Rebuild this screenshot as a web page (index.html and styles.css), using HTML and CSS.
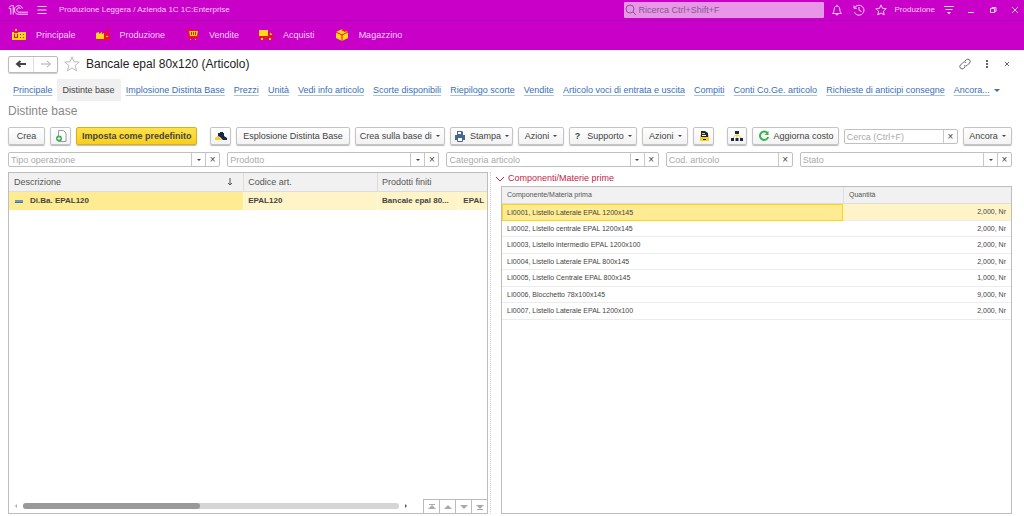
FILE: index.html
```html
<!DOCTYPE html>
<html lang="it">
<head>
<meta charset="utf-8">
<title>Produzione Leggera / Azienda 1C 1C:Enterprise</title>
<link rel="stylesheet" href="styles.css">
</head>
<body>
<header class="titlebar">
  <svg class="logo" viewBox="0 0 20 12" role="img" aria-label="1C"><path d="M.8 4.500H2.800V10.500M.8 3.500L3.500 1.500H5.200V10.500"/><path d="M14.600 4.500A4.200 4.200 0 1 0 11 10.200H20M12.800 4.800A2.200 2.200 0 1 0 11 8.200H20"/></svg>
  <button class="icon-btn" aria-label="Menu"><svg class="i12" viewBox="0 0 12 12"><path d="M1.500 2.500h9M1.500 6h9M1.500 9.500h9"/></svg></button>
  <span class="app-name">Produzione Leggera / Azienda 1C 1C:Enterprise</span>
  <label class="global-search">
    <svg class="i12" viewBox="0 0 12 12"><circle cx="5" cy="5" r="4"/><path d="M8 8l3 3"/></svg>
    <input type="text" aria-label="Ricerca" placeholder="Ricerca Ctrl+Shift+F">
  </label>
  <div class="title-tools">
    <button class="icon-btn" aria-label="Notifiche"><svg class="i12" viewBox="0 0 12 12"><path d="M1.500 9.500h9C9 8 9 7 8.800 5 8.600 3 7.500 2 6 2S3.400 3 3.200 5C3 7 3 8 1.500 9.500zM6 .8V2M4.800 9.700a1.200 1.300 0 0 0 2.400 0"/></svg></button>
    <button class="icon-btn" aria-label="Cronologia"><svg class="i12" viewBox="0 0 12 12"><path d="M1.500 4A5 5 0 1 1 1.300 8M1 1.500V4.300H3.800M6 3v3.300l2.500 1.200"/></svg></button>
    <button class="icon-btn" aria-label="Preferiti"><svg class="i12" viewBox="0 0 12 12"><path d="M6 .9l1.500 3.400 3.700.4-2.800 2.500.8 3.700L6 9l-3.200 1.900.8-3.700L.8 4.700l3.700-.4z"/></svg></button>
    <span class="user">Produzione</span>
    <button class="icon-btn" aria-label="Opzioni"><svg class="i12" viewBox="0 0 12 12"><path d="M1 2.500h10M2.500 5.500h7"/><path class="solid" d="M4 8h4L6 10.500z"/></svg></button>
  </div>
  <div class="window-tools">
    <button class="icon-btn" aria-label="Riduci"><svg class="i8" viewBox="0 0 8 8"><path d="M1 6.500h6"/></svg></button>
    <button class="icon-btn" aria-label="Ripristina"><svg class="i8" viewBox="0 0 8 8"><path d="M1.500 2.500h4v4h-4zM3 2.500v-1h4v4H5.500"/></svg></button>
    <button class="icon-btn" aria-label="Chiudi"><svg class="i8" viewBox="0 0 8 8"><path d="M1 1l6 6M7 1L1 7"/></svg></button>
  </div>
</header>

<nav class="sections" aria-label="Sezioni">
  <a href="#"><svg viewBox="0 0 16 14"><path class="y" d="M1 4h14v8H1z"/><path class="r" d="M3 3h4v2H3zM3 6h1v4H3zM6 6h1v4H6zM4 9h2v1H4zM9 6h1v1H9zM12 6h1v1h-1zM9 9h1v1H9zM12 9h1v1h-1z"/><path class="y" d="M4 1h2v2H4z"/></svg>Principale</a>
  <a href="#"><svg viewBox="0 0 16 14"><path class="y" d="M1 5l3-1v2l3-2v2l2-1v6H1z"/><path class="r" d="M9 8h6v4H9zM10 4h3l1 4H9zM11 2l4-2v2l-2 1h-2zM1 11h14v1H1z"/><path class="y" d="M11 8h2v1h-2z"/></svg>Produzione</a>
  <a href="#"><svg viewBox="0 0 16 14"><path class="r" d="M2 1h3v9H4L3 2H2zM5 7h9v3H5z"/><path class="y" d="M5 2h9l-1 6H6zM6 11h1v1H6zM11 11h1v1h-1z"/><path class="r" d="M7 4h1v3H7zM9 4h1v3H9zM11 4h1v3h-1zM5 2h9v1H5zM5 12h2v1H5zM10 12h2v1h-2z"/></svg>Vendite</a>
  <a href="#"><svg viewBox="0 0 16 14"><path class="y" d="M1 2h9v6H1z"/><path class="r" d="M1 8h14v3H1zM11 4h2l2 3v3h-4z"/><path class="y" d="M12 5h1l1 2h-2zM3 10h2v2H3zM11 10h2v2h-2z"/></svg>Acquisti</a>
  <a href="#"><svg viewBox="0 0 16 14"><path class="y" d="M2 4l6-3 6 3v6l-6 3-6-3z"/><path class="line-r" d="M2 4l6 3 6-3M8 7v6"/><path class="r" d="M8 1l5 2-2 1-4-2z"/></svg>Magazzino</a>
</nav>

<main class="page">
  <div class="heading-row">
    <div class="history">
      <button aria-label="Indietro"><svg class="i12" viewBox="0 0 12 12"><path class="back" d="M11 6H3M5.500 3L2 6l3.500 3"/></svg></button>
      <button aria-label="Avanti"><svg class="i12" viewBox="0 0 12 12"><path class="forward" d="M1 6h9M7 3l3.500 3L7 9"/></svg></button>
    </div>
    <button class="star" aria-label="Aggiungi ai preferiti"><svg viewBox="0 0 16 16"><path d="M8 .8l2 5 5.300.3-4.100 3.400 1.400 5.300L8 11.900l-4.600 2.900 1.400-5.300L.7 6.100 6 5.800z"/></svg></button>
    <h1>Bancale epal 80x120 (Articolo)</h1>
    <div class="page-tools">
      <button class="icon-btn" aria-label="Collegamento"><svg class="i12" viewBox="0 0 12 12"><path d="M5 7.500a2.300 2.300 0 0 0 3 0l2.500-2.500a2.200 2.200 0 0 0-3.200-3.200L6 3M7 4.500a2.300 2.300 0 0 0-3 0L1.500 7a2.200 2.200 0 0 0 3.200 3.200L6 9"/></svg></button>
      <button class="icon-btn" aria-label="Altro"><svg class="i8" viewBox="0 0 8 8"><path class="solid" d="M3 0h2v2H3zM3 3h2v2H3zM3 6h2v2H3z"/></svg></button>
      <button class="icon-btn" aria-label="Chiudi scheda"><svg class="i8" viewBox="0 0 8 8"><path d="M2 2l4 4M6 2L2 6"/></svg></button>
    </div>
  </div>

  <nav class="tabs" aria-label="Schede">
    <a href="#">Principale</a>
    <a href="#" class="active" aria-current="page">Distinte base</a>
    <a href="#">Implosione Distinta Base</a>
    <a href="#">Prezzi</a>
    <a href="#">Unità</a>
    <a href="#">Vedi info articolo</a>
    <a href="#">Scorte disponibili</a>
    <a href="#">Riepilogo scorte</a>
    <a href="#">Vendite</a>
    <a href="#">Articolo voci di entrata e uscita</a>
    <a href="#">Compiti</a>
    <a href="#">Conti Co.Ge. articolo</a>
    <a href="#">Richieste di anticipi consegne</a>
    <a href="#">Ancora... <i class="caret"></i></a>
  </nav>

  <h2>Distinte base</h2>

  <div class="toolbar">
    <button class="btn">Crea</button>
    <button class="btn" aria-label="Copia"><svg class="i12" viewBox="0 0 12 12"><path class="sheet" d="M3.500 .5h5L11 3v8.500H3.500z"/><circle class="green" cx="4" cy="8.500" r="3"/><path class="plus" d="M4 7v3M2.500 8.500h3"/></svg></button>
    <button class="btn primary">Imposta come predefinito</button>
    <button class="btn group-start" aria-label="Distinta"><svg class="i12" viewBox="0 0 12 12"><path class="gold" d="M0 10V8l3-2 4 4z"/><path class="navy" d="M3 3h2V2h3v1h1v3l3 2v2H8L5 7 3 6z"/></svg></button>
    <button class="btn">Esplosione Distinta Base</button>
    <button class="btn">Crea sulla base di <i class="caret"></i></button>
    <button class="btn"><svg class="i12" viewBox="0 0 12 12"><path class="printer" d="M3 1h5l1 1v3H3zM1 5h10v5H9V8H3v2H1z"/><path class="paper" d="M4 2h3v2H4zM4 9h4v2H4z"/><path class="line-printer" d="M3.500 8v3.500h5V8"/></svg>Stampa <i class="caret"></i></button>
    <button class="btn">Azioni <i class="caret"></i></button>
    <button class="btn"><b class="help">?</b>Supporto <i class="caret"></i></button>
    <button class="btn">Azioni <i class="caret"></i></button>
    <button class="btn" aria-label="Rapporto"><svg class="i12" viewBox="0 0 12 12"><path class="gold" d="M2 5h9v6H2z"/><path class="navy" d="M3 1h4l3 2v4H3z"/><path class="gold" d="M4 3h3v1H4z"/><path class="paper" d="M4 5h4v1H4z"/><path class="navy" d="M5 9h3v1H5z"/></svg></button>
    <button class="btn group-start" aria-label="Struttura"><svg class="i12" viewBox="0 0 12 12"><path class="line-gold" d="M6 4v4M2 8L4 5.500h4L10 8"/><path class="navy" d="M4 1h4v3H4zM0 8h3v3H0zM4.500 8h3v3h-3zM9 8h3v3H9z"/></svg></button>
    <button class="btn"><svg class="i12" viewBox="0 0 12 12"><path class="line-green" d="M9.500 3.200A4.200 4.200 0 1 0 10.200 7"/><path class="green" d="M10.500 1v4h-4z"/></svg>Aggiorna costo</button>
    <div class="field"><input type="text" aria-label="Cerca" placeholder="Cerca (Ctrl+F)"><button class="clear" aria-label="Cancella"></button></div>
    <button class="btn">Ancora <i class="caret"></i></button>
  </div>

  <div class="filters">
    <div class="field"><input type="text" aria-label="Tipo operazione" placeholder="Tipo operazione"><button aria-label="Apri elenco"><i class="caret"></i></button><button class="clear" aria-label="Cancella"></button></div>
    <div class="field"><input type="text" aria-label="Prodotto" placeholder="Prodotto"><button aria-label="Apri elenco"><i class="caret"></i></button><button class="clear" aria-label="Cancella"></button></div>
    <div class="field"><input type="text" aria-label="Categoria articolo" placeholder="Categoria articolo"><button aria-label="Apri elenco"><i class="caret"></i></button><button class="clear" aria-label="Cancella"></button></div>
    <div class="field"><input type="text" aria-label="Cod. articolo" placeholder="Cod. articolo"><button class="clear" aria-label="Cancella"></button></div>
    <div class="field"><input type="text" aria-label="Stato" placeholder="Stato"><button aria-label="Apri elenco"><i class="caret"></i></button><button class="clear" aria-label="Cancella"></button></div>
  </div>

  <div class="panes">
    <section class="list-pane">
      <table class="boms">
        <colgroup><col class="c-desc"><col class="c-code"><col class="c-prod"><col class="c-more"></colgroup>
        <thead><tr><th><span class="sorted">Descrizione <svg class="i8" viewBox="0 0 8 8"><path d="M4 0v7M2 5l2 2 2-2"/></svg></span></th><th>Codice art.</th><th colspan="2">Prodotti finiti</th></tr></thead>
        <tbody><tr><td class="current"><span class="item"><i class="dash"></i>Di.Ba. EPAL120</span></td><td>EPAL120</td><td>Bancale epal 80...</td><td class="cut">EPAL</td></tr></tbody>
      </table>
      <div class="list-foot">
        <i class="tip left"></i>
        <div class="track"><div class="thumb"></div></div>
        <i class="tip right"></i>
        <div class="pager">
          <button aria-label="Inizio"><svg class="i8" viewBox="0 0 8 8"><path d="M1 1h6v1H1zM0 6h8L4 2z"/></svg></button>
          <button aria-label="Su"><svg class="i8" viewBox="0 0 8 8"><path d="M0 6h8L4 2z"/></svg></button>
          <button aria-label="Giù"><svg class="i8" viewBox="0 0 8 8"><path d="M0 2h8L4 6z"/></svg></button>
          <button aria-label="Fine"><svg class="i8" viewBox="0 0 8 8"><path d="M0 2h8L4 6zM1 6h6v1H1z"/></svg></button>
        </div>
      </div>
    </section>
    <div class="splitter"></div>
    <section class="detail-pane">
      <h3><svg class="i8" viewBox="0 0 8 8"><path d="M0 2l4 4 4-4"/></svg>Componenti/Materie prime</h3>
      <div class="detail-box">
        <table class="parts">
          <colgroup><col class="c-part"><col class="c-qty"></colgroup>
          <thead><tr><th>Componente/Materia prima</th><th>Quantità</th></tr></thead>
          <tbody>
            <tr class="selected"><td>LI0001, Listello Laterale EPAL 1200x145</td><td>2,000, Nr</td></tr>
            <tr><td>LI0002, Listello centrale EPAL 1200x145</td><td>2,000, Nr</td></tr>
            <tr><td>LI0003, Listello intermedio EPAL 1200x100</td><td>2,000, Nr</td></tr>
            <tr><td>LI0004, Listello Laterale EPAL 800x145</td><td>2,000, Nr</td></tr>
            <tr><td>LI0005, Listello Centrale EPAL 800x145</td><td>1,000, Nr</td></tr>
            <tr><td>LI0006, Blocchetto 78x100x145</td><td>9,000, Nr</td></tr>
            <tr><td>LI0007, Listello Laterale EPAL 1200x100</td><td>2,000, Nr</td></tr>
          </tbody>
        </table>
      </div>
    </section>
  </div>
</main>
</body>
</html>
```
FILE: styles.css
```css
* { box-sizing: border-box; }
body {
  margin: 0;
  min-height: 100vh;
  display: flex;
  flex-direction: column;
  background: #fff;
  color: #444;
  font: 9px/12px "Liberation Sans", Arial, sans-serif;
}
button, input { font: inherit; color: inherit; margin: 0; padding: 0; border: 0; background: none; }
button { display: flex; align-items: center; justify-content: center; }
h1, h2, h3 { margin: 0; font-weight: normal; }
svg { display: block; flex: none; fill: none; stroke: currentColor; }
.i12 { width: 12px; height: 12px; }
.i8 { width: 8px; height: 8px; }
.solid { fill: currentColor; stroke: none; }
.caret { flex: none; display: inline-block; border: 2px solid transparent; border-top-color: currentColor; border-bottom: 0; }

/* Application bar */
.titlebar {
  display: flex;
  align-items: center;
  height: 21px;
  padding: 0 5px 0 8px;
  background: #c800c8;
  border-bottom: 1px solid #b400b8;
  color: #fbd0fb;
}
.logo { width: 20px; height: 12px; margin-right: 8px; }
.app-name { margin-left: 11px; flex: 1; font-size: 8px; }
.global-search {
  display: flex;
  align-items: center;
  gap: 2px;
  width: 200px;
  height: 16px;
  padding: 0 1px;
  border-radius: 1px;
  background: #e896e8;
  color: #85598a;
}
.global-search input { flex: 1; min-width: 0; outline: 0; }
.global-search input::placeholder { color: #85598a; }
.title-tools { display: flex; align-items: center; gap: 10px; margin-left: 7px; }
.user { font-size: 8px; margin: 0 -2px; }
.window-tools { display: flex; gap: 14px; margin-left: 12px; }

/* Sections */
.sections {
  display: flex;
  align-items: center;
  gap: 19px;
  height: 29px;
  padding: 0 11px 2px;
  background: #c800c8;
  color: #fbd0fb;
}
.sections a { display: flex; align-items: center; gap: 9px; color: inherit; text-decoration: none; }
.sections svg { width: 16px; height: 14px; stroke: none; }
.y { fill: #ffd91a; }
.r { fill: #f01020; }
.sections .line-r { stroke: #f01020; }

/* Page heading */
.page { flex: 1; display: flex; flex-direction: column; padding: 0 12px 2px 8px; }
.heading-row { display: flex; align-items: center; height: 28px; }
.history { display: flex; border: 1px solid #bbb; border-radius: 2px; box-shadow: 0 1px 1px #ccc; }
.history button { width: 24px; height: 15px; }
.history button + button { border-left: 1px solid #ddd; }
.back { stroke: #444; stroke-width: 2; }
.forward { stroke: #aaa; }
.star { margin: 0 6px 0 6px; color: #bbb; }
.star svg { width: 16px; height: 16px; }
h1 { flex: 1; font-size: 12px; line-height: 16px; color: #222; }
.page-tools { display: flex; align-items: center; gap: 12px; color: #666; padding-right: 1px; }

.tabs { display: flex; height: 22px; margin-top: 1px; padding-right: 8px; justify-content: space-between; }
.tabs a { display: flex; align-items: center; gap: 4px; white-space: nowrap; color: #3a6fb7; text-decoration: underline; text-underline-offset: 2px; text-decoration-color: #a9c3e6; padding: 0 4px 0 5px; }
.tabs a.active { padding: 0 6px; background: #f0f0f0; color: #444; text-decoration: none; }
.tabs .caret { border-width: 3px 3px 0; }
h2 { font-size: 12px; line-height: 20px; color: #888; }

/* Commands */
.toolbar {
  display: grid;
  grid-template-columns:
    minmax(0, 37fr) minmax(0, 21fr) minmax(0, 121fr) minmax(0, 29fr) minmax(0, 113fr)
    minmax(0, 90fr) minmax(0, 63fr) minmax(0, 46fr) minmax(0, 68fr) minmax(0, 46fr)
    minmax(0, 21fr) minmax(0, 28fr) minmax(0, 86fr) minmax(0, 114fr) minmax(0, 49fr);
  gap: 5px;
  margin-top: 6px;
}
.btn {
  gap: 4px;
  height: 18px;
  border: 1px solid #c4c4c4;
  border-radius: 2px;
  background: linear-gradient(#fff, #f2f2f2);
  box-shadow: 0 1px 1px #bbb;
  white-space: nowrap;
}
.group-start { margin-left: 8px; }
.primary { background: linear-gradient(#ffe14a, #f7cf1c); border-color: #d5b020; font-weight: bold; }
.help { margin-right: 3px; }
.green { fill: #3db151; stroke: none; }
.plus { stroke: #fff; }
.sheet { fill: #fff; stroke: #99a; }
.gold { fill: #fccf1e; stroke: none; }
.navy { fill: #182844; stroke: none; }
.printer { fill: #47688f; stroke: none; }
.paper { fill: #fff; stroke: none; }
.line-printer { stroke: #47688f; }
.line-gold { stroke: #fccf1e; }
.line-green { stroke: #3db151; stroke-width: 2; }

.field { display: flex; min-width: 0; height: 15px; border: 1px solid #c0c0c0; border-radius: 2px; }
.toolbar .field { margin-top: 2px; }
.field input { flex: 1; min-width: 0; padding: 0 2px; outline: 0; }
.field input::placeholder { color: #aaa; }
.field button { width: 14px; border-left: 1px solid #c8c8c8; }
.clear::before { content: "×"; font-size: 10px; line-height: 12px; }
.filters {
  display: grid;
  grid-template-columns:
    minmax(0, 212fr) minmax(0, 212fr) minmax(0, 212fr) minmax(0, 127fr) minmax(0, 212fr);
  gap: 7px;
  margin-top: 7px;
}

/* Lists */
.panes { flex: 1; display: flex; margin-top: 5px; }
.list-pane { flex: 479 1 0; min-width: 0; display: flex; flex-direction: column; justify-content: space-between; border: 1px solid #bdbdbd; }
.splitter { width: 1px; margin: 0 5px 0 2px; border-left: 1px dotted #ccc; }
.detail-pane { flex: 517 1 0; min-width: 0; display: flex; flex-direction: column; }
table { width: 100%; table-layout: fixed; border-collapse: separate; border-spacing: 0; }
th, td { padding: 0 5px; text-align: left; white-space: nowrap; overflow: hidden; }
th { background: #f1f1f1; color: #555; font-weight: normal; border-bottom: 1px solid #ddd; }
th + th { border-left: 1px solid #ddd; }
.boms th { height: 19px; }
.boms th + th, .boms td + td { padding-left: 4px; }
.boms td { height: 18px; background: #fff4c8; font-size: 8px; font-weight: bold; border-left: 1px solid #fff9e0; }
.boms .current { background: #ffeb91; border-left: 0; }
.boms .cut { padding-right: 0; }
.c-desc { width: 49%; }
.c-code { width: 28%; }
.c-prod { width: 17%; }
.sorted { display: flex; justify-content: space-between; align-items: center; padding-right: 4px; }
.item { display: flex; align-items: center; gap: 7px; }
.dash { width: 8px; height: 3px; margin-left: 1px; background: #6b9ac0; border-bottom: 1px solid #4b7396; }
.list-foot { display: flex; align-items: center; height: 14px; padding-left: 6px; }
.tip { border: 2px solid transparent; width: 0; height: 0; }
.tip.left { border-right-color: #aaa; border-left: 0; }
.tip.right { border-left-color: #555; border-right: 0; }
.track { flex: 1; height: 6px; margin: 0 6px; border-radius: 3px; background: #d5d5d5; }
.thumb { width: 47%; height: 6px; border-radius: 3px; background: #999; }
.pager { display: flex; margin-left: 16px; border-top: 1px solid #bbb; }
.pager button { width: 16px; height: 13px; border-left: 1px solid #bbb; }
.pager svg { fill: #aaa; stroke: none; }

h3 { display: flex; align-items: center; gap: 4px; font-size: 9px; line-height: 13px; color: #c8234a; }
.detail-box { flex: 1; margin: 1px 0 0 5px; border: 1px solid #bdbdbd; }
.parts { font-size: 7px; }
.c-part { width: 67%; }
.parts th { height: 17px; }
.parts td { height: 16px; border-bottom: 1px solid #ececec; }
.parts tr:nth-child(odd) td { height: 17px; }
.parts td + td { text-align: right; }
.parts .selected td { background: #fff4c8; }
.parts .selected td:first-child { background: #ffeb91; border: 1px solid #ffd21e; padding-left: 4px; }
```
